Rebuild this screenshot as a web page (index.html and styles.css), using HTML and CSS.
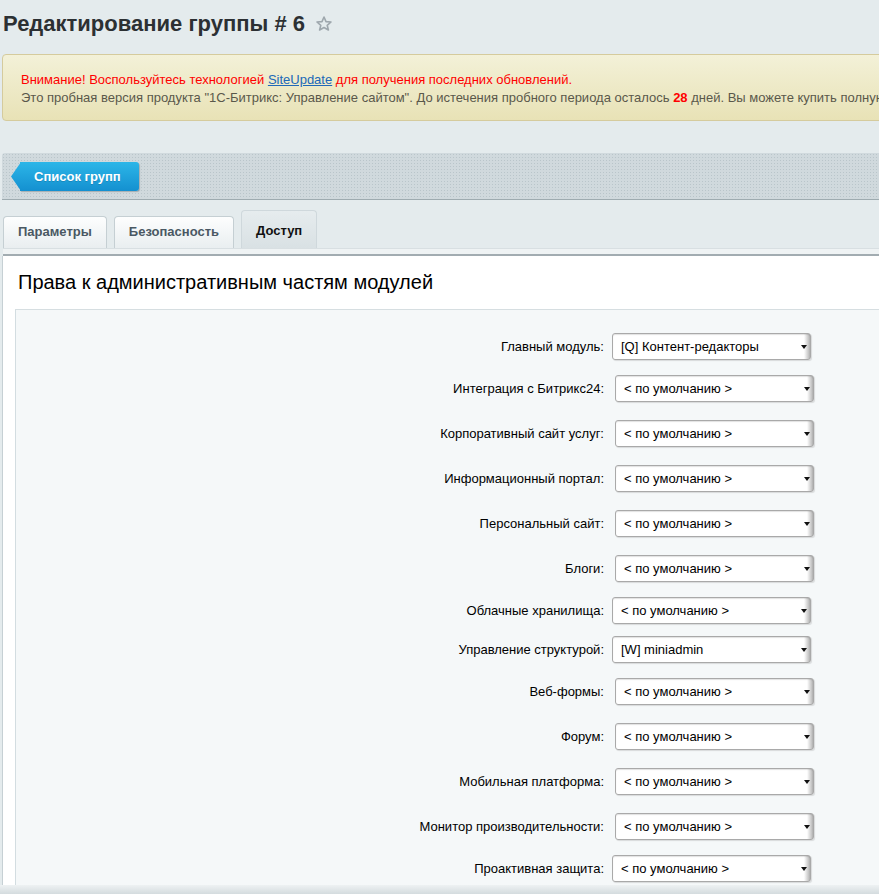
FILE: index.html
```html
<!DOCTYPE html>
<html lang="ru">
<head>
<meta charset="utf-8">
<title>Редактирование группы # 6</title>
<link rel="stylesheet" href="styles.css">
</head>
<body>
<div class="page">
  <h1 class="title">Редактирование группы # 6<svg class="star" width="16" height="15" viewBox="0 0 16 15"><polygon points="8,1 10,5.6 15,6 11.2,9.3 12.4,14 8,11.5 3.6,14 4.8,9.3 1,6 6,5.6" fill="none" stroke="#9ea7ad" stroke-width="1.6" stroke-linejoin="round"/></svg></h1>

  <div class="notice">
    <div class="notice-line warn">Внимание! Воспользуйтесь технологией <a class="notice-link" href="#">SiteUpdate</a> для получения последних обновлений.</div>
    <div class="notice-line">Это пробная версия продукта "1С-Битрикс: Управление сайтом". До истечения пробного периода осталось <b class="days">28</b> дней. Вы можете купить полную версию этого продукта.</div>
  </div>

  <div class="toolbar">
    <a class="back-btn" href="#">Список групп</a>
  </div>

  <div class="tabs">
    <div class="tab">Параметры</div>
    <div class="tab">Безопасность</div>
    <div class="tab active">Доступ</div>
  </div>
  <div class="tab-strip"></div>

  <div class="panel">
    <h2 class="panel-title">Права к административным частям модулей</h2>
    <div class="form">
      <div class="row"><label class="lbl">Главный модуль:</label><span class="sel-wrap"><select class="sel"><option>[Q] Контент-редакторы</option></select></span></div>
      <div class="row alt"><label class="lbl">Интеграция с Битрикс24:</label><span class="sel-wrap"><select class="sel"><option>&lt; по умолчанию &gt;</option></select></span></div>
      <div class="row alt"><label class="lbl">Корпоративный сайт услуг:</label><span class="sel-wrap"><select class="sel"><option>&lt; по умолчанию &gt;</option></select></span></div>
      <div class="row alt"><label class="lbl">Информационный портал:</label><span class="sel-wrap"><select class="sel"><option>&lt; по умолчанию &gt;</option></select></span></div>
      <div class="row alt"><label class="lbl">Персональный сайт:</label><span class="sel-wrap"><select class="sel"><option>&lt; по умолчанию &gt;</option></select></span></div>
      <div class="row alt"><label class="lbl">Блоги:</label><span class="sel-wrap"><select class="sel"><option>&lt; по умолчанию &gt;</option></select></span></div>
      <div class="row"><label class="lbl">Облачные хранилища:</label><span class="sel-wrap"><select class="sel"><option>&lt; по умолчанию &gt;</option></select></span></div>
      <div class="row"><label class="lbl">Управление структурой:</label><span class="sel-wrap"><select class="sel"><option>[W] miniadmin</option></select></span></div>
      <div class="row alt"><label class="lbl">Веб-формы:</label><span class="sel-wrap"><select class="sel"><option>&lt; по умолчанию &gt;</option></select></span></div>
      <div class="row alt"><label class="lbl">Форум:</label><span class="sel-wrap"><select class="sel"><option>&lt; по умолчанию &gt;</option></select></span></div>
      <div class="row alt"><label class="lbl">Мобильная платформа:</label><span class="sel-wrap"><select class="sel"><option>&lt; по умолчанию &gt;</option></select></span></div>
      <div class="row alt"><label class="lbl">Монитор производительности:</label><span class="sel-wrap"><select class="sel"><option>&lt; по умолчанию &gt;</option></select></span></div>
      <div class="row"><label class="lbl">Проактивная защита:</label><span class="sel-wrap"><select class="sel"><option>&lt; по умолчанию &gt;</option></select></span></div>
    </div>
  </div>
</div>
<div class="bottom-shade"></div>
</body>
</html>
```

FILE: styles.css
```css
html, body {
  margin: 0;
  padding: 0;
  overflow: hidden;
}
body {
  background: #e4ebed;
  font-family: "Liberation Sans", Arial, sans-serif;
  font-size: 13px;
  color: #000;
}
.page {
  width: 1400px;
  padding-left: 2px;
}
.title {
  margin: 0;
  padding: 11px 0 0 1px;
  font-size: 22px;
  line-height: 26px;
  font-weight: bold;
  color: #2c3033;
  display: flex;
  align-items: center;
}
.star {
  margin-left: 11px;
  margin-top: -1px;
}
.notice {
  margin-top: 17px;
  width: 1300px;
  border: 1px solid #d5cb9d;
  border-radius: 4px;
  background: linear-gradient(#f3f1d8, #e8e2b6);
  padding: 16px 18px 13px 18px;
  white-space: nowrap;
}
.notice-line {
  line-height: 18px;
  color: #5a584b;
}
.notice-line.warn {
  color: #f00;
}
.notice-link {
  color: #2068b8;
  text-decoration: underline;
}
.days {
  color: #f00;
}
.toolbar {
  margin-top: 32px;
  height: 47px;
  box-sizing: border-box;
  padding: 9px 0 0 18px;
  border-radius: 3px 3px 0 0;
  border-bottom: 1px solid #9eabb0;
  background-color: #d0d9dd;
  background-image: radial-gradient(circle, #b9c5ca 0.7px, transparent 1px);
  background-size: 3px 3px;
}
.back-btn {
  position: relative;
  display: inline-block;
  height: 29px;
  line-height: 29px;
  padding: 0 18px 0 14px;
  color: #fff;
  font-weight: bold;
  font-size: 13px;
  text-decoration: none;
  border-radius: 0 3px 3px 0;
  background: linear-gradient(#2cb6e8, #1490d0);
  box-shadow: 1px 1px 1px rgba(0, 0, 0, 0.2);
  text-shadow: 0 1px 0 rgba(0, 0, 0, 0.15);
}
.back-btn::before {
  content: "";
  position: absolute;
  left: -9px;
  top: 0;
  width: 10px;
  height: 29px;
  background: linear-gradient(#2cb6e8, #1490d0);
  clip-path: polygon(100% 0, 100% 100%, 0 50%);
}
.tabs {
  margin-top: 10px;
  display: flex;
  align-items: flex-end;
  gap: 7px;
  padding-left: 1px;
}
.tab {
  box-sizing: border-box;
  height: 32px;
  padding: 5px 14px 6px;
  line-height: 20px;
  font-weight: bold;
  color: #4a5863;
  border: 1px solid #c5cfd3;
  border-bottom: none;
  border-radius: 4px 4px 0 0;
  background: linear-gradient(#fdfefe, #e9eef0);
}
.tab.active {
  height: 38px;
  padding-top: 10px;
  color: #111;
  border-color: #cfd8dc;
  background: linear-gradient(#e6ecee, #d9e1e4);
}
.tab-strip {
  margin-left: 1px;
  height: 5px;
  border-top: 1px solid #d8dfe2;
  border-bottom: 2px solid #a2acb1;
  background: #eff3f4;
}
.panel {
  border-left: 1px solid #c6d0d4;
  background: #fff;
  padding-top: 15px;
}
.panel-title {
  margin: 0;
  padding-left: 15px;
  font-size: 20px;
  line-height: 22px;
  font-weight: normal;
  color: #000;
}
.form {
  margin: 16px 0 0 12px;
  border-top: 1px solid #d6dee1;
  border-left: 1px solid #d3dde1;
  background: #f5f8f9;
  padding-top: 17px;
  padding-bottom: 20px;
}
.row {
  display: flex;
  align-items: center;
  padding: 6px 0;
}
.lbl {
  width: 596px;
  box-sizing: border-box;
  padding-right: 8px;
  text-align: right;
  color: #000;
}
.sel-wrap {
  position: relative;
  display: inline-block;
  width: 199px;
  height: 27px;
}
.row.alt .sel-wrap {
  margin: 3px 0 3px 3px;
}
.sel {
  -webkit-appearance: none;
  appearance: none;
  display: block;
  width: 199px;
  height: 27px;
  margin: 0;
  box-sizing: border-box;
  padding: 0 0 0 8px;
  border: 1px solid #a9a9a9;
  border-radius: 3px;
  font-family: "Liberation Sans", Arial, sans-serif;
  font-size: 13px;
  color: #000;
  background: linear-gradient(to right, #fff 0, #fff calc(100% - 6px), #e6e6e6 calc(100% - 4px), #b3b3b3 100%);
  box-shadow: inset 0 1px 1px rgba(0, 0, 0, 0.12), 1px 1px 1px rgba(0, 0, 0, 0.12);
  outline: none;
}
.sel-wrap::after {
  content: "";
  position: absolute;
  right: 4px;
  top: 12px;
  width: 0;
  height: 0;
  border-left: 3px solid transparent;
  border-right: 3px solid transparent;
  border-top: 4px solid #111;
  pointer-events: none;
}
.bottom-shade {
  position: fixed;
  left: 0;
  right: 0;
  bottom: 0;
  height: 9px;
  background: linear-gradient(#eef2f3, #d4dbde);
}
```
